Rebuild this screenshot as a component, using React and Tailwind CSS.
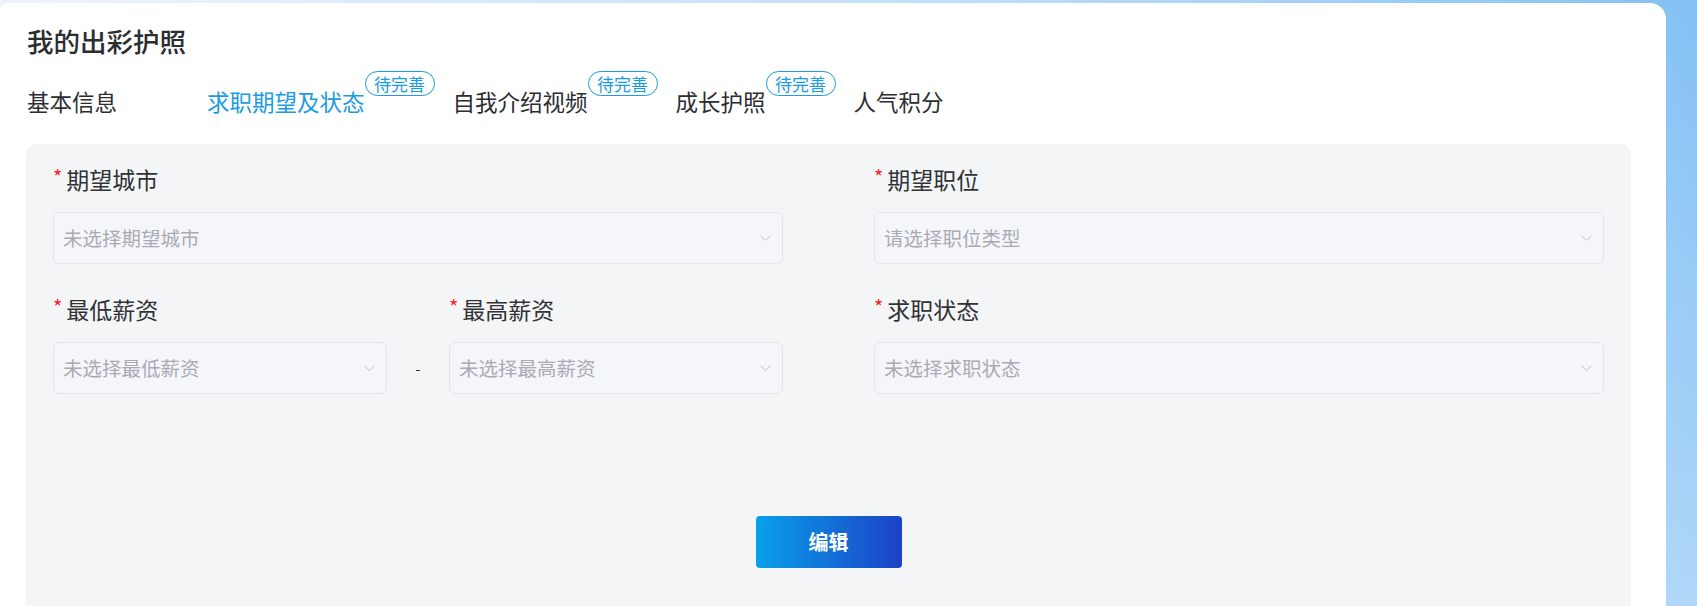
import React from "react";

const tabs = [
  { name: "基本信息", badge: false },
  { name: "求职期望及状态", badge: true, active: true },
  { name: "自我介绍视频", badge: true },
  { name: "成长护照", badge: true },
  { name: "人气积分", badge: false },
];

const Chevron = () => (
  <svg width="11" height="6" viewBox="0 0 11 6" fill="none" className="shrink-0">
    <path d="M0.5 0.5L5.5 5.5L10.5 0.5" stroke="#c0c4cc" strokeWidth="1" />
  </svg>
);

const Label = ({ text }) => (
  <div className="flex items-start h-[30px] mb-[18px]">
    <span className="text-[20px] leading-[22px] text-[#f5222d] mr-[4px] mt-[2px]">*</span>
    <span className="text-[23px] leading-[30px] text-[#303236]">{text}</span>
  </div>
);

const Select = ({ placeholder, className = "" }) => (
  <div
    className={
      "h-[52px] flex items-center justify-between pl-[9px] pr-[11px] rounded-[6px] border border-[#e3e5ec] bg-[#f5f6fa] " +
      className
    }
  >
    <span className="text-[19.5px] leading-[28px] text-[#a9abb3]">{placeholder}</span>
    <Chevron />
  </div>
);

const App = () => {
  return (
    <div
      className="w-[1697px] h-[606px] overflow-hidden pt-[3px] bg-[linear-gradient(to_bottom,rgba(255,255,255,0)_0%,rgba(255,255,255,0.35)_100%),linear-gradient(to_right,#eef4fc_0%,#bcdcf8_60%,#84c1f4_100%)]"
      style={{ fontFamily: '"Noto Sans CJK SC", "Noto Sans", sans-serif' }}
    >
      <div className="w-[1666px] h-[603px] bg-white rounded-tl-[8px] rounded-tr-[16px] pl-[26px] pt-[22px] overflow-hidden">
        <div className="text-[26.5px] leading-[32px] font-medium text-[#2b2d31] pl-[1px]">我的出彩护照</div>

        <div className="flex items-start mt-[14px] pl-[1px] gap-[18px]">
          {tabs.map((tab) => (
            <div key={tab.name} className="flex items-start">
              <span
                className={
                  "text-[22.5px] leading-[30px] mt-[15px] " +
                  (tab.active ? "text-[#1a9be2]" : "text-[#2b2d31]")
                }
              >
                {tab.name}
              </span>
              {tab.badge && (
                <span className="h-[25px] w-[70px] flex items-center justify-center rounded-full border border-[#1a9be2] bg-white text-[17px] leading-[20px] text-[#1a9be2]">
                  待完善
                </span>
              )}
              {tab.name === "基本信息" && <span className="w-[72px]" />}
            </div>
          ))}
        </div>

        <div className="mt-[28px] w-[1605px] h-[480px] bg-[#f4f5f7] rounded-[10px] px-[27px] pt-[20px]">
          <div className="grid grid-cols-2 gap-x-[91px] gap-y-[30px]">
            <div>
              <Label text="期望城市" />
              <Select placeholder="未选择期望城市" />
            </div>
            <div>
              <Label text="期望职位" />
              <Select placeholder="请选择职位类型" />
            </div>
            <div className="flex items-end">
              <div className="w-[334px]">
                <Label text="最低薪资" />
                <Select placeholder="未选择最低薪资" />
              </div>
              <div className="w-[62px] h-[52px] flex items-center justify-center text-[14px] text-[#222]">-</div>
              <div className="w-[334px]">
                <Label text="最高薪资" />
                <Select placeholder="未选择最高薪资" />
              </div>
            </div>
            <div>
              <Label text="求职状态" />
              <Select placeholder="未选择求职状态" />
            </div>
          </div>

          <div className="flex justify-center mt-[122px]">
            <button className="w-[146px] h-[52px] rounded-[4px] bg-[linear-gradient(to_right,#09a0e9,#1c42c6)] text-[20px] font-bold text-white">
              编辑
            </button>
          </div>
        </div>
      </div>
    </div>
  );
};

export default App;
